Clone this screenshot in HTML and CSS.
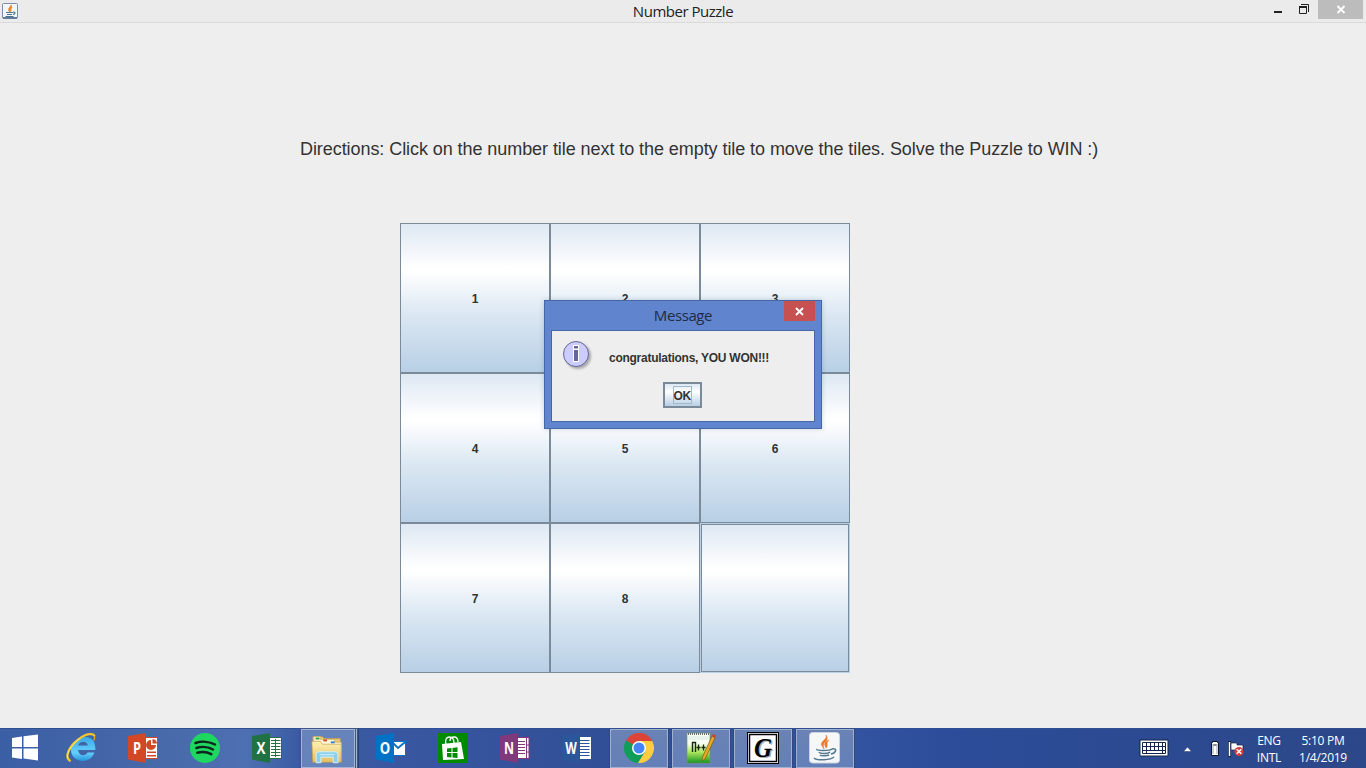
FILE: index.html
```html
<!DOCTYPE html>
<html lang="en">
<head>
<meta charset="utf-8">
<title>Number Puzzle</title>
<link rel="stylesheet" href="styles.css">
</head>
<body>
<div class="screen">
  <header class="titlebar">
    <svg class="app-icon" width="16" height="16" viewBox="0 0 16 16">
      <rect x=".5" y=".5" width="15" height="15" rx="1" fill="#f3f6f8" stroke="#7890a8"/>
      <path d="M1 14.8h14" stroke="#4f6c8b" stroke-width="1.4"/>
      <path d="M9 2c1 2-3 3-2 5 .3 1 1 1 1 2M10 4c-2 1-2 2-1 4" fill="none" stroke="#e58a35" stroke-width="1.6"/>
      <path d="M4 9.5h7M5 11.5h5M3.500 13.500h8M11 9c3 0 2 2 0 2.500" fill="none" stroke="#4c7492" stroke-width="1.200"/>
    </svg>
    <span class="title">Number Puzzle</span>
    <div class="controls">
      <svg width="118" height="22" viewBox="0 0 118 22">
        <rect x="26" y="11" width="8" height="2" fill="#222"/>
        <path d="M53 4.500h7.500v7.500M51.500 6.500h7v7h-7v-7z" fill="none" stroke="#222"/>
        <path d="M51 7h8" stroke="#222" stroke-width="2"/>
        <rect x="70" y="0" width="45" height="19" fill="#bcbcbc"/>
        <path d="M89.500 6l7 7M96.500 6l-7 7" stroke="#fff" stroke-width="1.900"/>
      </svg>
    </div>
  </header>

  <main class="frame">
    <p class="directions">Directions: Click on the number tile next to the empty tile to move the tiles. Solve the Puzzle to WIN :)</p>
    <div class="board">
      <div class="tile">1</div><div class="tile">2</div><div class="tile">3</div>
      <div class="tile">4</div><div class="tile">5</div><div class="tile">6</div>
      <div class="tile">7</div><div class="tile">8</div><div class="tile empty"></div>
    </div>
  </main>

  <section class="dialog">
    <div class="dialog-head"><span>Message</span>
      <div class="dialog-close"><svg width="31" height="20" viewBox="0 0 31 20"><path d="M12 7l7 7M19 7l-7 7" stroke="#fff" stroke-width="1.900"/></svg></div>
    </div>
    <div class="dialog-body">
      <svg class="info" width="32" height="32" viewBox="0 0 32 32">
        <defs><filter id="soft" x="-30%" y="-30%" width="160%" height="160%"><feGaussianBlur stdDeviation="1.300"/></filter></defs>
        <circle cx="16" cy="16" r="13" fill="#999" opacity=".8" filter="url(#soft)"/>
        <circle cx="14" cy="14" r="12.500" fill="#ccccff" stroke="#666699"/>
        <path d="M11 5h6v4h-6zM11 9h6v13h-6z" fill="#fff"/>
        <path d="M12 6h4v2.500h-4zM12 10h4v11h-4z" fill="#666699"/>
      </svg>
      <span class="message">congratulations, YOU WON!!!</span>
      <button class="ok"><span>OK</span></button>
    </div>
  </section>

  <footer class="taskbar">
    <svg class="start" width="50" height="40" viewBox="0 0 50 40">
      <path d="M12 10l10-1.500v10.500H12zM23.500 8.300L38 6.500V19H23.500zM12 20.500h10v10.500l-10-1.500zM23.500 20.500H38v12l-14.500-2z" fill="#fff"/>
    </svg>
    <svg class="app" viewBox="0 0 62 40">
      <defs><linearGradient id="ie" x2="0" y2="1"><stop stop-color="#38a9e4"/><stop offset=".65" stop-color="#65d0ff"/><stop offset="1" stop-color="#2594d8"/></linearGradient></defs>
      <path d="M37.500 24.500c-2 4-8.500 4-9.500-2.500h17.300c1.500-18-20.500-16-24 -3.500-3.500 16.500 19 19.500 23 6zM28.200 17.500c1.200-5 8.800-5 9.700 0z" fill="url(#ie)" fill-rule="evenodd"/>
      <path d="M20.500 33.300c-6.500-4-2-14.500 8-22 8-6 15-6.500 16-3" fill="none" stroke="#f4c529" stroke-width="2.300"/>
      <path d="M17.500 30c-1-6 6-15 13-20" fill="none" stroke="#ffe986" stroke-width=".8"/>
      <path d="M44.500 8c.5 1.500 0 3-.8 4.500" fill="none" stroke="#e7ac18" stroke-width="1.300"/>
    </svg>
    <svg class="app" viewBox="0 0 62 40">
      <rect x="32" y="9.500" width="13.500" height="21" fill="#fff" stroke="#d24726"/>
      <path d="M39 12v5h5a5 5 0 1 1-5-5zM40.500 11a5 5 0 0 1 4.500 4.500h-4.500zM35 23.500h9v1.500h-9zM35 27h9v1.500h-9z" fill="#d24726"/>
      <path d="M16 8l18-3v30L16 31.500z" fill="#d24726"/>
      <text class="office" x="25" y="26" textLength="8" lengthAdjust="spacingAndGlyphs">P</text>
    </svg>
    <svg class="app" viewBox="0 0 62 40">
      <circle cx="31" cy="20" r="15" fill="#1ed760"/>
      <path d="M21.500 15c6-2 14-1.500 19.500 1.500M22.500 20c5-1.700 12-1 16.500 1.500M23.300 24.700c5-1.300 10-.7 14 1.500" fill="none" stroke="#10251a" stroke-width="2.500" stroke-linecap="round"/>
    </svg>
    <svg class="app" viewBox="0 0 62 40">
      <rect x="32" y="9.500" width="13.500" height="21" fill="#fff" stroke="#207245"/>
      <path d="M35 12.500h9.500M35 15.500h9.500M35 18.500h9.500M35 21.500h9.500M35 24.500h9.500M35 27.500h9.500M39.500 11v18" stroke="#207245" fill="none"/>
      <path d="M16 8l18-3v30L16 31.500z" fill="#207245"/>
      <text class="office" x="25" y="26" textLength="9" lengthAdjust="spacingAndGlyphs">X</text>
    </svg>
    <div class="group">
      <svg width="54" height="39" viewBox="300 728 54 39">
        <defs><linearGradient id="folder" x2="0" y2="1"><stop stop-color="#fff3b5"/><stop offset="1" stop-color="#e5bd61"/></linearGradient></defs>
        <path d="M311 735h10l2 2h17v22h-29z" fill="#e9c66f" stroke="#c79a41" stroke-width=".6"/>
        <path d="M312 735h7v3h15v3h7v19h-29z" fill="#fff5d8" stroke="#d4b161" stroke-width=".7"/>
        <path d="M314 736h4v2h-4z" fill="#26a447"/><path d="M322 738h4v2h-4z" fill="#d94b28"/><path d="M330 740h4v2h-4z" fill="#2583cf"/>
        <path d="M310 740h9l2 3h20v19h-30z" fill="url(#folder)" stroke="#c79d4b" stroke-width=".7"/>
        <path d="M314.500 762.500v-8.500q0-3 3-3h17q3 0 3 3v8.500h-5v-6h-13v6z" fill="#8ccfeb" stroke="#d4f3ff"/>
        <path d="M318 754h16" stroke="#d7f4ff"/>
      </svg>
      <i class="stack"></i>
    </div>
    <svg class="app" viewBox="0 0 62 40">
      <path d="M33 13.500h12.500v14H33z" fill="#fff" stroke="#0072c6"/>
      <path d="M33 15l5 5 9-7.500" fill="none" stroke="#0072c6" stroke-width="1.800"/>
      <path d="M16 8l18-3v30L16 31.500z" fill="#0072c6"/>
      <text class="office" x="25" y="26" textLength="10.500" lengthAdjust="spacingAndGlyphs">O</text>
    </svg>
    <svg class="app" viewBox="0 0 62 40">
      <rect x="16" y="5" width="30" height="30" fill="#008a00"/>
      <path d="M20 16l19-2 3 17-21 1z" fill="#fff"/>
      <path d="M24 17c-1-5 0-8 3-8s5 2 5 6M28 13c0-3 1-4 4-4s4 2 4 5" fill="none" stroke="#fff" stroke-width="1.300"/>
      <path d="M25 20.500l4.500-.5v4H25zM30.500 19.900l5-.6V24h-5zM25 25h4.500v4.500l-4.500-.4zM30.500 25h5v5l-5-.5z" fill="#008a00"/>
    </svg>
    <svg class="app" viewBox="0 0 62 40">
      <rect x="32" y="9.500" width="13" height="21" fill="#fff" stroke="#80397b"/>
      <path d="M34 13.500h7M34 16.500h7M34 19.500h7M34 22.500h7M34 25.500h7" stroke="#80397b"/>
      <path d="M42.500 10v21M43 17h3M43 24h3" stroke="#80397b"/>
      <path d="M16 8l18-3v30L16 31.500z" fill="#80397b"/>
      <text class="office" x="25" y="26" textLength="10" lengthAdjust="spacingAndGlyphs">N</text>
    </svg>
    <svg class="app" viewBox="0 0 62 40">
      <rect x="33" y="9" width="12" height="22" fill="#fff"/>
      <path d="M34 12.500h9.500M34 15.500h9.500M34 18.500h9.500M34 21.500h9.500M34 24.500h9.500M34 27.500h9.500" stroke="#2b579a"/>
      <path d="M16 8l18-3v30L16 31.500z" fill="#2b579a"/>
      <text class="office" x="25" y="26" textLength="11.500" lengthAdjust="spacingAndGlyphs">W</text>
    </svg>
    <div class="running"><svg width="56" height="38" viewBox="3 1 56 38">
      <path d="M31 20L18 12.500a15 15 0 0 1 26 0z" fill="#db4437"/><path d="M31 5a15 15 0 0 1 13 8H31z" fill="#db4437"/>
      <path d="M18 12.500A15 15 0 0 0 30 35l7-11-6-4z" fill="#0f9d58"/>
      <path d="M31 13h13.200A15 15 0 0 1 30 35l7.500-12z" fill="#ffcd40"/>
      <circle cx="31" cy="20" r="7" fill="#fff"/><circle cx="31" cy="20" r="5.500" fill="#4285f4"/>
    </svg></div>
    <div class="running"><svg width="56" height="38" viewBox="3 1 56 38">
      <defs><linearGradient id="note" x2="0" y2="1"><stop offset=".35" stop-color="#f8fff1"/><stop offset=".65" stop-color="#a9e45b"/><stop offset="1" stop-color="#159420"/></linearGradient></defs>
      <rect x="17" y="5" width="23" height="30" fill="url(#note)" stroke="#719568" stroke-width=".7"/>
      <path d="M18 6h21" stroke="#656d77" stroke-width="2" stroke-dasharray="1 1"/><path d="M18 9h21M18 11h21" stroke="#c4d6dd" stroke-width=".6"/>
      <path d="M22.500 24V14.500h3V24" fill="none" stroke="#18270f" stroke-width="1.400"/>
      <path d="M26.500 19.500h4M28.500 16.500v6M31.500 19.500h4M33.500 16.500v6" stroke="#18270f" stroke-width="1.300"/>
      <path d="M42 8l3 2-10 21-3 2 .5-4z" fill="#e7a92c" stroke="#80550e" stroke-width=".7"/><path d="M42 8l1-2 3 1.500-1 2.500z" fill="#d4402d"/>
    </svg></div>
    <div class="running"><svg width="56" height="38" viewBox="3 1 56 38">
      <rect x="15.500" y="4.500" width="31" height="31" fill="#fff" stroke="#000"/><rect x="17.500" y="6.500" width="27" height="27" fill="#fff" stroke="#000" stroke-width="1.500"/>
      <text class="g-shadow" x="32.500" y="30" textLength="18" lengthAdjust="spacingAndGlyphs">G</text><text class="g" x="31" y="28.500" textLength="18" lengthAdjust="spacingAndGlyphs">G</text>
    </svg></div>
    <div class="running"><svg width="56" height="38" viewBox="3 1 56 38">
      <rect x="15.500" y="4.500" width="30" height="30.500" rx="3" fill="#f6f7f8" stroke="#cbd2da"/>
      <path d="M32 7c2 5-7 6-4 11l2 3c-1-5-1-5 2-8 2-2 1-5 0-6M35 12c-5 2-5 4-3 8 3-3-1-4 3-8" fill="#ed7526" stroke="#ed7526" stroke-width=".5"/>
      <path d="M23 21c-2 2 13 2 15 0M25 24c1 2 9 2 11 0M26 27c1 1 7 1 9 0M20 30c3 3 17 2 20-1M38 21c6-1 4 4-1 5" fill="none" stroke="#54788f" stroke-width="1.500"/>
    </svg></div>
    <div class="tray">
      <svg width="120" height="40" viewBox="1134 728 120 40">
        <path d="M1140 740h28v16h-28z" fill="#fff" stroke="#142445"/>
        <path d="M1142.500 742.500h23v11h-23zM1142.500 746.500h23M1142.500 750.500h23M1146.500 742.500v11M1150.500 742.500v8M1154.500 742.500v8M1158.500 742.500v8M1162.500 742.500v11" fill="none" stroke="#142445"/>
        <path d="M1183.500 751.500l4-4.500 4 4.500z" fill="#fff" stroke="#203361" stroke-width=".5"/>
        <path d="M1212.500 741.500h5v1h1v13h-7v-13h1z" fill="#fff" stroke="#10172a"/><path d="M1213.500 744.500h3v1h-3z" fill="#10172a"/><path d="M1213 744v10M1217 744v10" stroke="#526181" stroke-width=".6"/>
        <path d="M1229.500 741v16" stroke="#142445" stroke-width="3"/><path d="M1229.500 742v14" stroke="#fff" stroke-width="1.500"/>
        <path d="M1231 743h6v2h6v7h-6v-2h-6z" fill="#fff" stroke="#142445" stroke-width=".7"/>
        <circle cx="1239" cy="751.500" r="4.500" fill="#d93b36"/><path d="M1236.700 749.200l4.600 4.600M1241.300 749.200l-4.600 4.600" stroke="#fff" stroke-width="1.500"/>
      </svg>
      <div class="lang"><span>ENG</span><span>INTL</span></div>
      <div class="clock"><span>5:10 PM</span><span>1/4/2019</span></div>
    </div>
  </footer>
</div>
</body>
</html>
```
FILE: styles.css
```css
* { box-sizing: border-box; }
body { margin: 0; overflow: hidden; }
svg { display: block; flex: none; }
.screen { position: relative; width: 1366px; height: 768px; display: flex; flex-direction: column; background: #eee; font-family: "Liberation Sans", Arial, sans-serif; }
.titlebar { height: 23px; display: grid; grid-template-columns: 118px 1fr 118px; background: #ebebeb; border-bottom: 1px solid #dadada; }
.app-icon { margin: 3px 0 0 2px; }
.title { text-align: center; font: 15px/23px "Open Sans", "Noto Sans", sans-serif; color: #222; letter-spacing: -.48px; }
.frame { flex: 1; padding: 115px 0 0 300px; }
.directions { margin: 0; height: 85px; font-size: 18px; line-height: 22px; letter-spacing: -.068px; color: #333; white-space: nowrap; }
.board { width: 450px; display: grid; grid-template-columns: repeat(3, 150px); grid-auto-rows: 150px; margin-left: 100px; }
.tile { display: flex; align-items: center; justify-content: center; padding-top: 2px; border: 1px solid #7a8a99; background: linear-gradient(#dde8f3 0%, #fff 30%, #fff 32%, #dce8f3 60%, #b8cfe5 100%); font-size: 12px; font-weight: bold; color: #333; }
.empty { border-color: #b8cfe5; box-shadow: inset 0 0 0 1px #7a8a99; }
.dialog { position: absolute; left: 544px; top: 300px; width: 278px; height: 129px; padding: 0 6px 6px; display: flex; flex-direction: column; background: #6084ce; border: 1px solid #4467a7; box-shadow: 0 0 5px rgba(40,60,90,.22); }
.dialog-head { height: 29px; display: grid; grid-template-columns: 31px 1fr 31px; text-align: center; }
.dialog-head span { grid-column: 2; font: 15px/29px "Open Sans", "Noto Sans", sans-serif; letter-spacing: -.4px; color: #202c44; }
.dialog-close { width: 31px; height: 20px; background: #c75050; }
.dialog-body { flex: 1; display: grid; grid-template-columns: 47px 1fr; grid-template-rows: 51px 26px; border: 1px solid #4467a7; background: #eee; padding: 0 12px 0 10px; }
.info { margin-top: 9px; }
.message { padding-top: 20px; font-size: 12px; line-height: 14px; font-weight: bold; letter-spacing: -.26px; color: #333; white-space: nowrap; }
.ok { grid-column: 1 / 3; justify-self: center; width: 39px; height: 26px; padding: 0; border: 2px solid #7a8a99; background: linear-gradient(#dde8f3, #fff 35%, #b8cfe5); display: flex; align-items: center; justify-content: center; font: bold 12px/18px "Liberation Sans", Arial, sans-serif; letter-spacing: -.3px; color: #333; }
.ok span { display: block; width: 19px; height: 18px; border: 1px solid #a3b8cc; }
.taskbar { height: 40px; display: flex; background: linear-gradient(90deg, #3b5fa5 0, #4768a9 150px, #4d70b2 245px, #3a5ba2 300px, #3856a0 430px, #304f96 600px, #3153a0 860px, #2c4c99 960px, #2c4889 1366px); border-top: 1px solid #2f4f91; }
.taskbar > svg, .taskbar > .group, .taskbar > .running, .tray { margin-top: -1px; }
.app { width: 62px; height: 40px; }
.group { width: 60px; height: 40px; margin-left: 1px; margin-right: 1px; padding: 1px 1px 0; display: flex; gap: 1px; border-left: 1px solid #40558b; border-right: 1px solid #293f7d; background: #40558b; }
.group svg { width: 54px; height: 39px; border: 1px solid #a5b4d3; background: #6684bb; }
.stack { width: 3px; height: 39px; border: 1px solid #a5b4d3; border-left: 0; background: #6984b7; }
.running { width: 58px; height: 39px; margin: 0 2px; border: 1px solid #a1b0cf; background: linear-gradient(#6a82b4, #6480b9); box-shadow: -1px 0 #304880, 1px 0 #304880; display: flex; justify-content: center; align-items: center; overflow: visible; }
.taskbar > .running { margin-top: 0; }
.running svg { margin-top: -1px; }
.office { font: bold 16.500px "Open Sans", "Noto Sans", sans-serif; fill: #fff; text-anchor: middle; }
.g, .g-shadow { font: italic bold 27px "Liberation Serif", serif; text-anchor: middle; }
.g-shadow { fill: #aaa; }
.tray { margin-left: auto; display: flex; color: #fff; font: 12px/17px "Open Sans", "Noto Sans", sans-serif; letter-spacing: -.25px; }
.lang, .clock { display: flex; flex-direction: column; align-items: center; padding-top: 4px; }
.lang { width: 30px; }
.clock { width: 82px; padding-right: 4px; }
```
